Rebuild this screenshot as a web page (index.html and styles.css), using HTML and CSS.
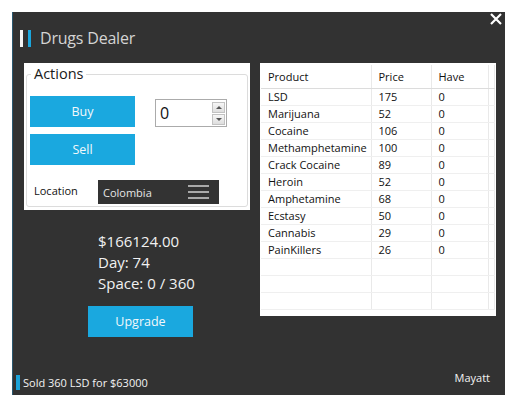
FILE: index.html
```html
<!DOCTYPE html>
<html lang="en">
<head>
<meta charset="utf-8">
<title>Drugs Dealer</title>
<link rel="stylesheet" href="styles.css">
</head>
<body>
<div class="window">
  <button class="close" aria-label="Close">
    <svg width="12" height="12" viewBox="0 0 12 12"><path d="M1 1L11 11M11 1L1 11" stroke="#fff" stroke-width="2.2"/></svg>
  </button>
  <header class="titlebar">
    <span class="logo"><i class="bar white"></i><i class="bar blue"></i></span>
    <h1 class="title">Drugs Dealer</h1>
  </header>

  <main class="main">
    <section class="left">
      <div class="panel">
        <fieldset class="group">
          <legend class="legend">Actions</legend>
          <div class="actions">
            <div class="buttons">
              <button class="btn">Buy</button>
              <button class="btn">Sell</button>
            </div>
            <div class="spin">
              <span class="spin-value">0</span>
              <span class="spin-arrows">
                <span class="arrow up"></span>
                <span class="arrow down"></span>
              </span>
            </div>
          </div>
          <div class="location">
            <span class="loc-label">Location</span>
            <div class="select">
              <span>Colombia</span>
              <span class="burger"><i></i><i></i><i></i></span>
            </div>
          </div>
        </fieldset>
      </div>

      <div class="stats">
        <p>$166124.00</p>
        <p>Day: 74</p>
        <p>Space: 0 / 360</p>
      </div>
      <button class="btn upgrade">Upgrade</button>
    </section>

    <section class="grid-wrap">
      <table class="grid">
        <thead>
          <tr><th>Product</th><th>Price</th><th>Have</th><th class="pad"></th></tr>
        </thead>
        <tbody>
          <tr><td>LSD</td><td>175</td><td>0</td><td class="pad"></td></tr>
          <tr><td>Marijuana</td><td>52</td><td>0</td><td class="pad"></td></tr>
          <tr><td>Cocaine</td><td>106</td><td>0</td><td class="pad"></td></tr>
          <tr><td>Methamphetamine</td><td>100</td><td>0</td><td class="pad"></td></tr>
          <tr><td>Crack Cocaine</td><td>89</td><td>0</td><td class="pad"></td></tr>
          <tr><td>Heroin</td><td>52</td><td>0</td><td class="pad"></td></tr>
          <tr><td>Amphetamine</td><td>68</td><td>0</td><td class="pad"></td></tr>
          <tr><td>Ecstasy</td><td>50</td><td>0</td><td class="pad"></td></tr>
          <tr><td>Cannabis</td><td>29</td><td>0</td><td class="pad"></td></tr>
          <tr><td>PainKillers</td><td>26</td><td>0</td><td class="pad"></td></tr>
          <tr class="empty"><td></td><td></td><td></td><td class="pad"></td></tr>
          <tr class="empty"><td></td><td></td><td></td><td class="pad"></td></tr>
          <tr class="empty"><td></td><td></td><td></td><td class="pad"></td></tr>
        </tbody>
      </table>
    </section>
  </main>

  <footer class="status">
    <span class="status-msg"><i class="mark"></i>Sold 360 LSD for $63000</span>
    <span class="author">Mayatt</span>
  </footer>
</div>
</body>
</html>
```

FILE: styles.css
```css
* { box-sizing: border-box; }

html, body {
  margin: 0;
  background: #ffffff;
}

body {
  padding: 12px 7px 6px 12px;
  font-family: "Open Sans", "Noto Sans", sans-serif;
}

.window {
  position: relative;
  height: 383px;
  background: #323232;
  border-left: 1px solid #2a5870;
  display: flex;
  flex-direction: column;
}

.close {
  position: absolute;
  top: 1px;
  right: 3px;
  padding: 0;
  border: 0;
  background: transparent;
  width: 12px;
  height: 12px;
  display: flex;
}

.titlebar {
  height: 51px;
  display: flex;
  align-items: center;
  padding: 1px 0 0 7px;
}

.logo {
  display: flex;
  gap: 5px;
  margin-right: 9px;
}

.bar {
  display: block;
  width: 3px;
  height: 17px;
}
.bar.white { background: #f4f4f4; }
.bar.blue { background: #1ba6dd; }

.title {
  margin: 0;
  font-size: 16px;
  font-weight: 400;
  color: #d4d4d4;
  letter-spacing: -0.2px;
}

.main {
  display: flex;
  gap: 10px;
  padding-left: 11px;
}

.left {
  width: 226px;
  display: flex;
  flex-direction: column;
}

.panel {
  background: #ffffff;
  height: 147px;
  padding: 1px 2px 3px 2px;
}

.group {
  margin: 0;
  height: 100%;
  border: 1px solid #dcdcdc;
  border-radius: 3px;
  padding: 12px 0 0 3px;
}

.legend {
  font-size: 14.5px;
  color: #1a1a1a;
  padding: 0 3px;
  margin-left: 1px;
  line-height: 20px;
}

.actions {
  display: flex;
  gap: 20px;
}

.buttons {
  display: flex;
  flex-direction: column;
  gap: 7px;
}

.btn {
  width: 105px;
  height: 31px;
  border: 0;
  background: #1aa8df;
  color: #f2f8fb;
  font-family: "Open Sans", "Noto Sans", sans-serif;
  font-size: 12.5px;
  padding: 0;
}

.spin {
  margin-top: 3px;
  width: 72px;
  height: 28px;
  border: 1px solid #ababab;
  display: flex;
  align-items: center;
  justify-content: space-between;
  padding: 0 1px 0 4px;
}

.spin-value {
  font-size: 16px;
  color: #111;
}

.spin-arrows {
  display: flex;
  flex-direction: column;
  gap: 1px;
}

.arrow {
  width: 13px;
  height: 11px;
  border: 1px solid #c2c2c2;
  background: linear-gradient(#f6f6f6, #dedede);
  position: relative;
}
.arrow::after {
  content: "";
  position: absolute;
  left: 3px;
  border-left: 3px solid transparent;
  border-right: 3px solid transparent;
}
.arrow.up::after { top: 3px; border-bottom: 3px solid #555; }
.arrow.down::after { top: 3px; border-top: 3px solid #555; }

.location {
  display: flex;
  align-items: center;
  margin-top: 15px;
}

.loc-label {
  width: 68px;
  padding-left: 4px;
  font-size: 11px;
  color: #111;
  margin-top: -4px;
}

.select {
  width: 121px;
  height: 24px;
  background: #333333;
  color: #e6e6e6;
  font-size: 11px;
  display: flex;
  align-items: center;
  justify-content: space-between;
  padding: 0 10px 0 5px;
}

.burger {
  display: flex;
  flex-direction: column;
  gap: 4px;
}
.burger i {
  display: block;
  width: 21px;
  height: 2px;
  background: #a9a9a9;
}

.stats {
  margin: 21px 0 0 74px;
  color: #f1f1f1;
  font-size: 15px;
  line-height: 21px;
}
.stats p { margin: 0; }

.upgrade {
  margin: 12px 0 0 64px;
}

.grid-wrap {
  width: 236px;
  height: 253px;
  background: #ffffff;
  padding: 2px 1px 0 1px;
  overflow: hidden;
}

.grid {
  width: 100%;
  border-collapse: collapse;
  table-layout: fixed;
  font-size: 11px;
  color: #111;
}

.grid th, .grid td {
  text-align: left;
  padding: 0 0 0 7px;
  white-space: nowrap;
  overflow: hidden;
  border-right: 1px solid #e9e9e9;
}

.grid th {
  font-weight: 400;
  height: 23px;
  border-bottom: 1px solid #dcdcdc;
}

.grid td {
  height: 17px;
  border-bottom: 1px solid #efefef;
}

.grid th:nth-child(1) { width: 110px; }
.grid th:nth-child(2) { width: 60px; }
.grid th:nth-child(3) { width: 57px; }

.status {
  margin-top: auto;
  height: 29px;
  display: flex;
  justify-content: space-between;
  align-items: flex-start;
  color: #f2f2f2;
  font-size: 11px;
  padding-right: 15px;
}

.status-msg {
  display: flex;
  align-items: center;
  margin-top: 9px;
  padding-left: 3px;
}

.mark {
  display: block;
  width: 4px;
  height: 15px;
  background: #1aa2d8;
  margin-right: 3px;
}

.author {
  margin-top: 4px;
}
```
